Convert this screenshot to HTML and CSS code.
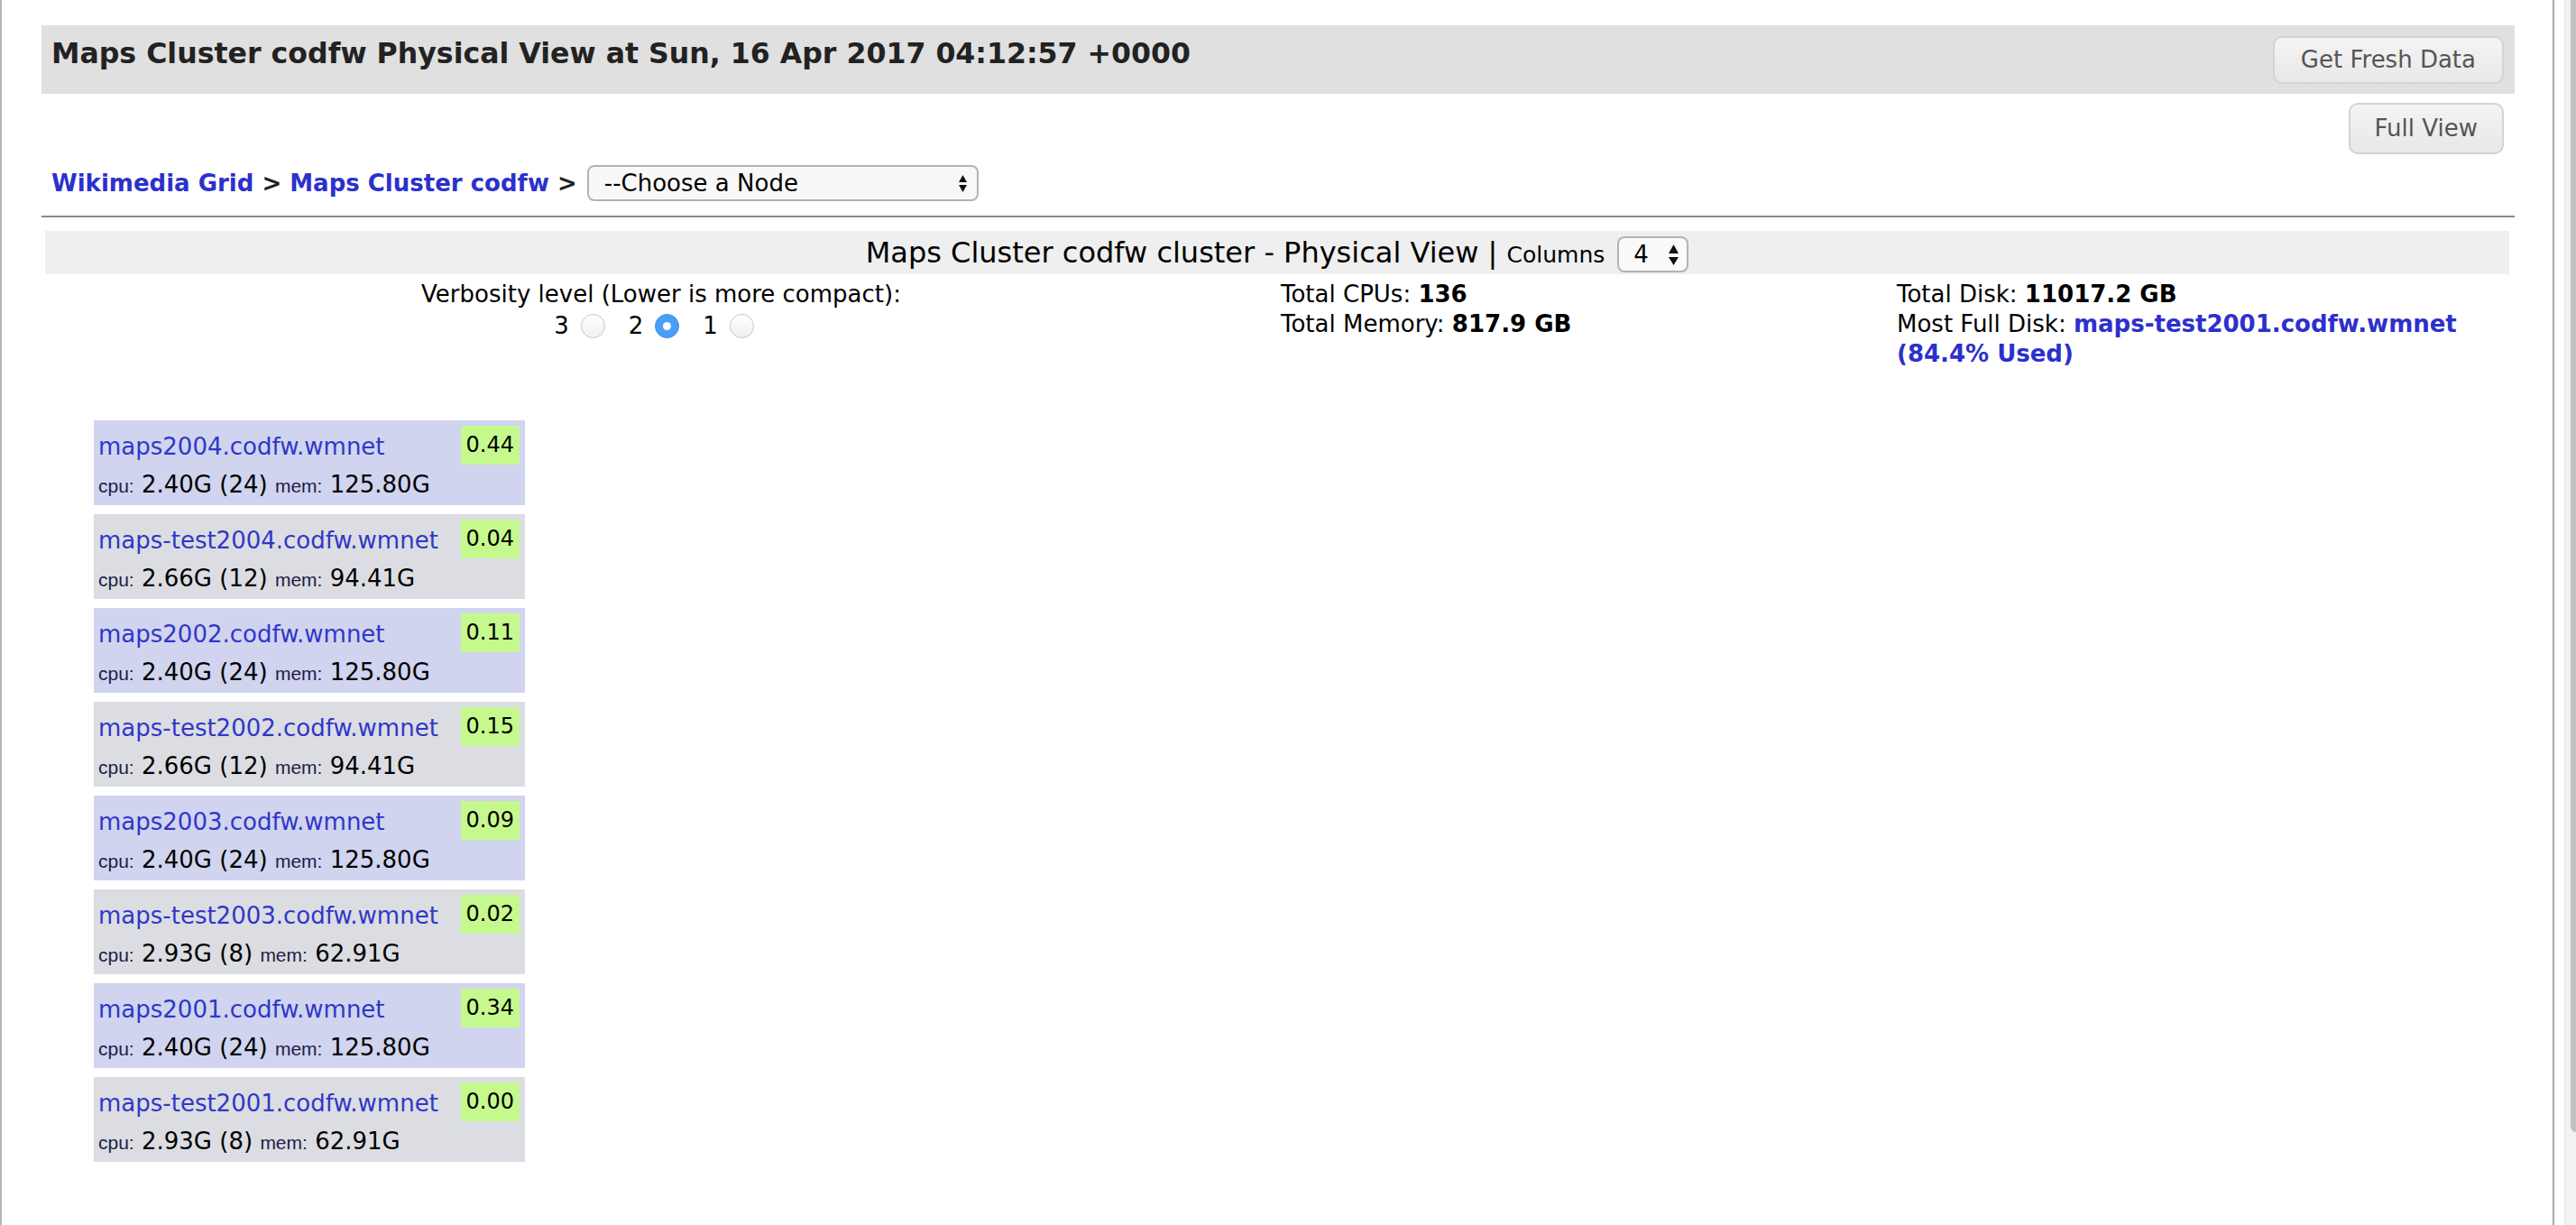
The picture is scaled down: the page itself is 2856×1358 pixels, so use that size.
FILE: index.html
```html
<!DOCTYPE html>
<html lang="en">
<head>
<meta charset="utf-8">
<title>Maps Cluster codfw Physical View</title>
<link rel="stylesheet" href="styles.css">
</head>
<body>
<div class="window">
  <main class="page">
    <header class="topbar">
      <h1 class="page-title">Maps Cluster codfw Physical View at Sun, 16 Apr 2017 04:12:57 +0000</h1>
      <button class="btn btn-fresh" type="button">Get Fresh Data</button>
    </header>
    <div class="view-row">
      <button class="btn btn-full" type="button">Full View</button>
    </div>
    <nav class="crumbs"><a href="#">Wikimedia Grid</a> &gt; <a href="#">Maps Cluster codfw</a> &gt; <span class="select select-node"><span>--Choose a Node</span><svg class="arrows" width="9" height="19" viewBox="0 0 9 19"><path d="M4.5 0 L9 8 L0 8 Z M0 11 L9 11 L4.5 19 Z" fill="#111"/></svg></span></nav>
    <hr class="rule">
    <div class="cluster-band"><span class="band-title">Maps Cluster codfw cluster - Physical View | </span><span class="band-cols">Columns</span><span class="select select-cols"><span>4</span><svg class="arrows" width="11" height="23" viewBox="0 0 11 23"><path d="M5.5 0 L11 10 L0 10 Z M0 14 L11 14 L5.5 23 Z" fill="#111"/></svg></span></div>
    <div class="stats">
      <div class="stat stat-verb">
        <div>Verbosity level (Lower is more compact):</div>
        <div class="radios">
          <span class="rlabel">3</span><span class="radio"></span>
          <span class="rlabel">2</span><span class="radio checked"></span>
          <span class="rlabel">1</span><span class="radio last"></span>
        </div>
      </div>
      <div class="stat">Total CPUs: <b>136</b><br>Total Memory: <b>817.9 GB</b></div>
      <div class="stat">Total Disk: <b>11017.2 GB</b><br>Most Full Disk: <a class="disk" href="#">maps-test2001.codfw.wmnet</a><br><a class="disk" href="#">(84.4% Used)</a></div>
    </div>
    <div class="nodes">
      <div class="node odd">
        <div class="node-info"><a class="node-name" href="#">maps2004.codfw.wmnet</a><div><span class="lbl">cpu:</span> 2.40G (24) <span class="lbl">mem:</span> 125.80G</div></div>
        <span class="load">0.44</span>
      </div>
      <div class="node even">
        <div class="node-info"><a class="node-name" href="#">maps-test2004.codfw.wmnet</a><div><span class="lbl">cpu:</span> 2.66G (12) <span class="lbl">mem:</span> 94.41G</div></div>
        <span class="load">0.04</span>
      </div>
      <div class="node odd">
        <div class="node-info"><a class="node-name" href="#">maps2002.codfw.wmnet</a><div><span class="lbl">cpu:</span> 2.40G (24) <span class="lbl">mem:</span> 125.80G</div></div>
        <span class="load">0.11</span>
      </div>
      <div class="node even">
        <div class="node-info"><a class="node-name" href="#">maps-test2002.codfw.wmnet</a><div><span class="lbl">cpu:</span> 2.66G (12) <span class="lbl">mem:</span> 94.41G</div></div>
        <span class="load">0.15</span>
      </div>
      <div class="node odd">
        <div class="node-info"><a class="node-name" href="#">maps2003.codfw.wmnet</a><div><span class="lbl">cpu:</span> 2.40G (24) <span class="lbl">mem:</span> 125.80G</div></div>
        <span class="load">0.09</span>
      </div>
      <div class="node even">
        <div class="node-info"><a class="node-name" href="#">maps-test2003.codfw.wmnet</a><div><span class="lbl">cpu:</span> 2.93G (8) <span class="lbl">mem:</span> 62.91G</div></div>
        <span class="load">0.02</span>
      </div>
      <div class="node odd">
        <div class="node-info"><a class="node-name" href="#">maps2001.codfw.wmnet</a><div><span class="lbl">cpu:</span> 2.40G (24) <span class="lbl">mem:</span> 125.80G</div></div>
        <span class="load">0.34</span>
      </div>
      <div class="node even">
        <div class="node-info"><a class="node-name" href="#">maps-test2001.codfw.wmnet</a><div><span class="lbl">cpu:</span> 2.93G (8) <span class="lbl">mem:</span> 62.91G</div></div>
        <span class="load">0.00</span>
      </div>
    </div>
  </main>
  <div class="scrollbar"><div class="track"><div class="thumb"></div></div></div>
</div>
</body>
</html>
```
FILE: styles.css
```css
html, body {
  margin: 0;
  padding: 0;
  background: #fff;
}
body {
  font-family: "DejaVu Sans", Verdana, sans-serif;
  font-size: 26px;
  color: #000;
}
.window {
  display: flex;
  height: 1358px;
  overflow: hidden;
  border-left: 2px solid #b4b4b4;
  box-sizing: border-box;
}
.page {
  flex: 1;
  min-width: 0;
  padding: 28px 42px 0 44px;
}
.topbar {
  display: flex;
  justify-content: space-between;
  align-items: center;
  height: 76px;
  background: #e0e0e0;
  padding: 0 12px 0 11px;
}
.page-title {
  align-self: flex-start;
  margin: 0;
  padding-top: 12px;
  font-size: 31.6px;
  line-height: 38px;
  font-weight: bold;
  color: #222;
  white-space: nowrap;
}
.btn {
  font-family: "DejaVu Sans", Verdana, sans-serif;
  font-size: 26px;
  color: #555;
  background: linear-gradient(#f4f4f4, #e8e8e8);
  border: 2px solid #d3d3d3;
  border-radius: 10px;
  box-sizing: border-box;
  padding: 0 29px;
  margin: 0;
}
.btn-fresh {
  height: 53px;
  line-height: 49px;
}
.view-row {
  display: flex;
  justify-content: flex-end;
  padding-right: 12px;
  margin-top: 10px;
}
.btn-full {
  height: 57px;
  line-height: 53px;
  padding: 0 27px;
}
.crumbs {
  margin-top: 12px;
  padding-left: 11px;
  height: 40px;
  line-height: 40px;
  font-weight: bold;
  color: #222;
  white-space: nowrap;
}
.crumbs a {
  color: #2c30cc;
  text-decoration: none;
}
.select {
  display: inline-flex;
  align-items: center;
  justify-content: space-between;
  box-sizing: border-box;
  height: 40px;
  border: 2px solid #b3b3b3;
  border-radius: 8px;
  background: #f8f8f8;
  font-weight: normal;
  font-size: 26px;
  line-height: 30px;
  color: #000;
}
.select-node {
  width: 434px;
  padding: 0 11px 0 17px;
  vertical-align: top;
  margin-left: 2px;
}
.rule {
  margin: 16px 0 0;
  border: 0;
  height: 2px;
  background: #8a8a8a;
}
.cluster-band {
  margin: 15px 6px 0 4px;
  height: 48px;
  background: #efefef;
  text-align: center;
  line-height: 48px;
  font-size: 32px;
  white-space: nowrap;
}
.band-cols {
  font-size: 25px;
}
.select-cols {
  width: 79px;
  padding: 0 9px 0 16px;
  margin-left: 14px;
  vertical-align: middle;
  background: #fafafa;
}
.stats {
  display: grid;
  grid-template-columns: 50% 25% 25%;
  margin: 0 6px 0 4px;
  padding-top: 6px;
  line-height: 33px;
}
.stat {
  padding-left: 4px;
}
.stat-verb {
  text-align: center;
  padding-left: 0;
}
.radios {
  display: flex;
  justify-content: center;
  align-items: center;
  height: 37px;
  padding-right: 16px;
}
.rlabel {
  margin-right: 13px;
}
.radio {
  width: 27px;
  height: 27px;
  box-sizing: border-box;
  border-radius: 50%;
  border: 1px solid #c6c6c6;
  background: linear-gradient(#ffffff, #f0f0f0);
  margin-right: 26px;
  position: relative;
}
.radio.last {
  margin-right: 0;
}
.radio.checked {
  background: #4b9ef7;
  border-color: #3d8fe9;
}
.radio.checked::after {
  content: "";
  position: absolute;
  left: 50%;
  top: 50%;
  width: 9px;
  height: 9px;
  margin: -4.5px 0 0 -4.5px;
  border-radius: 50%;
  background: #fff;
}
.disk {
  color: #2c30cc;
  font-weight: bold;
  text-decoration: none;
}
.nodes {
  display: flex;
  flex-direction: column;
  gap: 10px;
  width: 478px;
  margin: 57px 0 0 58px;
}
.node {
  display: flex;
  justify-content: space-between;
  align-items: flex-start;
  height: 94px;
  box-sizing: border-box;
  padding: 8px 6px 2px 5px;
}
.node.odd {
  background: #d0d4ee;
}
.node.even {
  background: #dcdde2;
}
.node-info {
  line-height: 42px;
  white-space: nowrap;
}
.node-name {
  display: block;
  color: #2f37c9;
  text-decoration: none;
}
.lbl {
  font-family: "Liberation Sans", Arial, sans-serif;
  font-size: 21px;
  line-height: 1;
  color: #202048;
}
.load {
  margin-top: -2px;
  background: #c6f98d;
  font-size: 24px;
  line-height: 43px;
  padding: 0 6px;
}
.scrollbar {
  width: 24px;
  border-left: 2px solid #a8a8a8;
  background: #fff;
  display: flex;
  justify-content: flex-end;
}
.track {
  width: 13px;
  background: #f2f2f2;
  border-left: 1px solid #e6e6e6;
  box-sizing: border-box;
  padding-left: 6px;
}
.thumb {
  height: 1255px;
  background: #c2c2c2;
  border-radius: 0 0 0 6px;
}
```
